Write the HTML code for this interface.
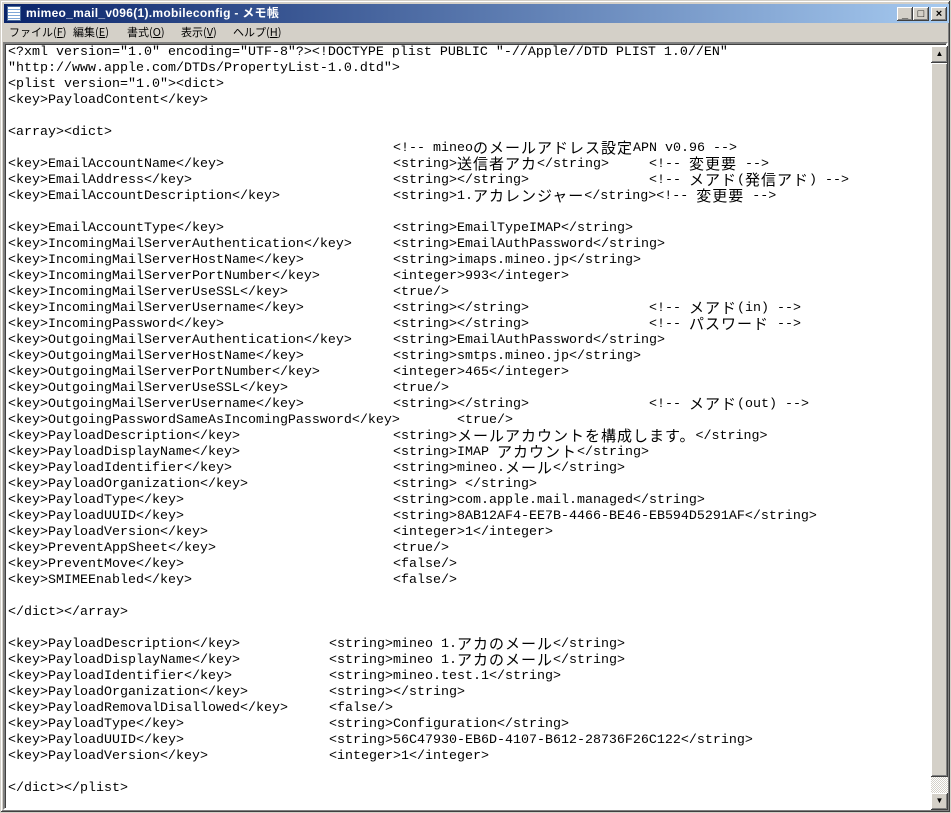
<!DOCTYPE html>
<html><head><meta charset="utf-8">
<style>
*{margin:0;padding:0;box-sizing:border-box}
body{width:951px;height:813px;background:#d4d0c8;position:relative;overflow:hidden;font-family:"Liberation Sans","Noto Sans CJK JP",sans-serif}
#win{position:absolute;left:0;top:0;width:951px;height:813px;border:1px solid #d4d0c8;box-shadow:inset -1px -1px #404040,inset 1px 1px #fff,inset -2px -2px #808080}
#title{position:absolute;left:3px;top:3px;width:945px;height:19px;background:linear-gradient(to right,#0a246a,#a6caf0)}
#title span{position:absolute;left:22px;top:2px;color:#fff;font-weight:bold;font-size:12px;font-family:"Liberation Sans","Noto Sans CJK JP",sans-serif;letter-spacing:0.3px;line-height:15px}
#ico{position:absolute;left:3px;top:2px;width:14px;height:15px;background:#fff;border:1px solid #4a6a9a;background-image:repeating-linear-gradient(#fff 0 2px,#7fa7d8 2px 3px)}
.btn{position:absolute;top:3px;width:16px;height:14px;background:#d4d0c8;box-shadow:inset -1px -1px #404040,inset 1px 1px #fff,inset -2px -2px #808080;font-size:11px;text-align:center;line-height:14px;font-weight:bold;color:#000}
#menu{position:absolute;left:3px;top:22px;height:19px;font-size:11px;color:#000;font-family:"Noto Sans CJK JP",sans-serif}
#menu span{position:absolute;top:2px;white-space:nowrap;line-height:15px}
#edit{position:absolute;left:3px;top:42px;width:945px;height:768px;background:#fff;border:2px solid;border-color:#808080 #fff #fff #808080;box-shadow:inset 1px 1px #404040}
#sb{position:absolute;left:926px;top:2px;width:17px;height:764px;background:repeating-conic-gradient(#d4d0c8 0 25%,#fff 0 50%) 0 0/2px 2px}
.sbb{position:absolute;left:0;width:17px;height:17px;background:#d4d0c8;box-shadow:inset -1px -1px #404040,inset 1px 1px #fff,inset -2px -2px #808080}
.t{position:absolute;left:0;top:0;font-family:"Liberation Mono",monospace;font-size:13.33px;line-height:16px;color:#000;white-space:pre}
.l{position:absolute;height:16px;white-space:pre;display:flex;align-items:flex-start;line-height:16px}
.j{font-family:"Noto Sans CJK JP","Liberation Mono",monospace;font-size:15px;letter-spacing:1px;line-height:16px;font-weight:normal;display:block;height:16px;overflow:visible;position:relative;top:-1px}
</style></head><body>
<div id="win">
<div id="title"><div id="ico"></div><span>mimeo_mail_v096(1).mobileconfig - メモ帳</span>
<div class="btn" style="left:893px">_</div><div class="btn" style="left:909px">□</div><div class="btn" style="left:927px">×</div></div>
<div id="menu"><span style="left:5px">ファイル(<u>F</u>)</span><span style="left:69px">編集(<u>E</u>)</span><span style="left:123px">書式(<u>O</u>)</span><span style="left:177px">表示(<u>V</u>)</span><span style="left:229px">ヘルプ(<u>H</u>)</span></div>
</div>
<div id="edit">
<div class="t" id="txt"></div>
<div id="sb"><div class="sbb" style="top:0;font-size:8px;text-align:center;line-height:16px">▲</div><div class="sbb" style="top:17px;height:714px"></div><div class="sbb" style="top:747px;font-size:8px;text-align:center;line-height:16px">▼</div></div>
</div>
<script>
var L=[
[[0,'<?xml version="1.0" encoding="UTF-8"?><!DOCTYPE plist PUBLIC "-//Apple//DTD PLIST 1.0//EN"']],
[[0,'"http://www.apple.com/DTDs/PropertyList-1.0.dtd">']],
[[0,'<plist version="1.0"><dict>']],
[[0,'<key>PayloadContent</key>']],
[],
[[0,'<array><dict>']],
[[385,'<!-- mineoのメールアドレス設定APN v0.96 -->']],
[[0,'<key>EmailAccountName</key>'],[385,'<string>送信者アカ</string>'],[641,'<!-- 変更要 -->']],
[[0,'<key>EmailAddress</key>'],[385,'<string></string>'],[641,'<!-- メアド(発信アド) -->']],
[[0,'<key>EmailAccountDescription</key>'],[385,'<string>1.アカレンジャー</string><!-- 変更要 -->']],
[],
[[0,'<key>EmailAccountType</key>'],[385,'<string>EmailTypeIMAP</string>']],
[[0,'<key>IncomingMailServerAuthentication</key>'],[385,'<string>EmailAuthPassword</string>']],
[[0,'<key>IncomingMailServerHostName</key>'],[385,'<string>imaps.mineo.jp</string>']],
[[0,'<key>IncomingMailServerPortNumber</key>'],[385,'<integer>993</integer>']],
[[0,'<key>IncomingMailServerUseSSL</key>'],[385,'<true/>']],
[[0,'<key>IncomingMailServerUsername</key>'],[385,'<string></string>'],[641,'<!-- メアド(in) -->']],
[[0,'<key>IncomingPassword</key>'],[385,'<string></string>'],[641,'<!-- パスワード -->']],
[[0,'<key>OutgoingMailServerAuthentication</key>'],[385,'<string>EmailAuthPassword</string>']],
[[0,'<key>OutgoingMailServerHostName</key>'],[385,'<string>smtps.mineo.jp</string>']],
[[0,'<key>OutgoingMailServerPortNumber</key>'],[385,'<integer>465</integer>']],
[[0,'<key>OutgoingMailServerUseSSL</key>'],[385,'<true/>']],
[[0,'<key>OutgoingMailServerUsername</key>'],[385,'<string></string>'],[641,'<!-- メアド(out) -->']],
[[0,'<key>OutgoingPasswordSameAsIncomingPassword</key>'],[449,'<true/>']],
[[0,'<key>PayloadDescription</key>'],[385,'<string>メールアカウントを構成します。</string>']],
[[0,'<key>PayloadDisplayName</key>'],[385,'<string>IMAP アカウント</string>']],
[[0,'<key>PayloadIdentifier</key>'],[385,'<string>mineo.メール</string>']],
[[0,'<key>PayloadOrganization</key>'],[385,'<string> </string>']],
[[0,'<key>PayloadType</key>'],[385,'<string>com.apple.mail.managed</string>']],
[[0,'<key>PayloadUUID</key>'],[385,'<string>8AB12AF4-EE7B-4466-BE46-EB594D5291AF</string>']],
[[0,'<key>PayloadVersion</key>'],[385,'<integer>1</integer>']],
[[0,'<key>PreventAppSheet</key>'],[385,'<true/>']],
[[0,'<key>PreventMove</key>'],[385,'<false/>']],
[[0,'<key>SMIMEEnabled</key>'],[385,'<false/>']],
[],
[[0,'</dict></array>']],
[],
[[0,'<key>PayloadDescription</key>'],[321,'<string>mineo 1.アカのメール</string>']],
[[0,'<key>PayloadDisplayName</key>'],[321,'<string>mineo 1.アカのメール</string>']],
[[0,'<key>PayloadIdentifier</key>'],[321,'<string>mineo.test.1</string>']],
[[0,'<key>PayloadOrganization</key>'],[321,'<string></string>']],
[[0,'<key>PayloadRemovalDisallowed</key>'],[321,'<false/>']],
[[0,'<key>PayloadType</key>'],[321,'<string>Configuration</string>']],
[[0,'<key>PayloadUUID</key>'],[321,'<string>56C47930-EB6D-4107-B612-28736F26C122</string>']],
[[0,'<key>PayloadVersion</key>'],[321,'<integer>1</integer>']],
[],
[[0,'</dict></plist>']]
];
function esc(s){return s.replace(/&/g,'&amp;').replace(/</g,'&lt;').replace(/>/g,'&gt;')}
var h='';
L.forEach(function(row,i){row.forEach(function(seg){
 var parts=seg[1].split(/([^\x00-\x7f]+)/);
 var s='';
 parts.forEach(function(p,k){if(!p)return; if(k%2)s+='<b class="j">'+p+'</b>'; else s+='<span>'+esc(p)+'</span>';});
 h+='<div class="l" style="left:'+(3+seg[0])+'px;top:'+(1+16*i)+'px">'+s+'</div>';
});});
document.getElementById('txt').innerHTML=h;
</script>
</body></html>
